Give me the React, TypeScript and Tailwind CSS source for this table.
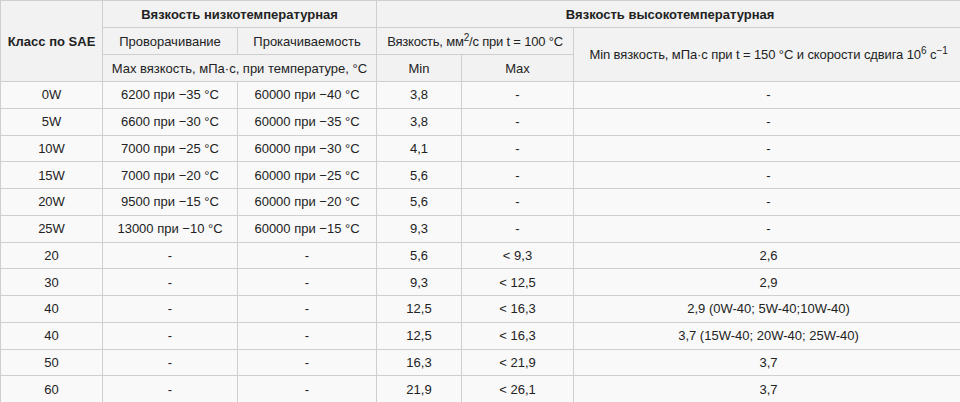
import React from 'react'

const rows: [string, string, string, string, string, string][] = [
  ['0W', '6200 при −35 °C', '60000 при −40 °C', '3,8', '-', '-'],
  ['5W', '6600 при −30 °C', '60000 при −35 °C', '3,8', '-', '-'],
  ['10W', '7000 при −25 °C', '60000 при −30 °C', '4,1', '-', '-'],
  ['15W', '7000 при −20 °C', '60000 при −25 °C', '5,6', '-', '-'],
  ['20W', '9500 при −15 °C', '60000 при −20 °C', '5,6', '-', '-'],
  ['25W', '13000 при −10 °C', '60000 при −15 °C', '9,3', '-', '-'],
  ['20', '-', '-', '5,6', '< 9,3', '2,6'],
  ['30', '-', '-', '9,3', '< 12,5', '2,9'],
  ['40', '-', '-', '12,5', '< 16,3', '2,9 (0W-40; 5W-40;10W-40)'],
  ['40', '-', '-', '12,5', '< 16,3', '3,7 (15W-40; 20W-40; 25W-40)'],
  ['50', '-', '-', '16,3', '< 21,9', '3,7'],
  ['60', '-', '-', '21,9', '< 26,1', '3,7'],
]

const th = 'border border-[#cfcfcf] bg-[#f2f2f2] px-1 text-center align-middle font-normal'
const td = 'border border-[#cfcfcf] px-1 text-center align-middle'

export default function App() {
  return (
    <div className="w-[960px] h-[402px] overflow-hidden bg-white">
      <table
        className="table-fixed border-collapse w-[963px] text-[13px] leading-none text-[#222] bg-[#f9f9f9]"
        style={{ fontFamily: '"Liberation Sans", Arial, sans-serif' }}
      >
        <colgroup>
          <col className="w-[102px]" />
          <col className="w-[135px]" />
          <col className="w-[139px]" />
          <col className="w-[85px]" />
          <col className="w-[112px]" />
          <col className="w-[390px]" />
        </colgroup>
        <thead>
          <tr className="h-[27px]">
            <th rowSpan={3} className={`${th} !font-bold`}>Класс по SAE</th>
            <th colSpan={2} className={`${th} !font-bold`}>Вязкость низкотемпературная</th>
            <th colSpan={3} className={`${th} !font-bold`}>Вязкость высокотемпературная</th>
          </tr>
          <tr className="h-[27px]">
            <th className={th}>Проворачивание</th>
            <th className={th}>Прокачиваемость</th>
            <th colSpan={2} className={`${th} whitespace-nowrap tracking-[-0.2px]`}>
              Вязкость, мм<sup className="text-[10px]">2</sup>/с при t = 100 °C
            </th>
            <th rowSpan={2} className={`${th} whitespace-nowrap tracking-[-0.1px]`}>
              Min вязкость, мПа·с при t = 150 °C и скорости сдвига 10<sup className="text-[10px]">6</sup> с<sup className="text-[10px]">−1</sup>
            </th>
          </tr>
          <tr className="h-[27px]">
            <th colSpan={2} className={`${th} whitespace-nowrap`}>Max вязкость, мПа·с, при температуре, °C</th>
            <th className={th}>Min</th>
            <th className={th}>Max</th>
          </tr>
        </thead>
        <tbody>
          {rows.map((r, i) => (
            <tr key={i} className="h-[26.75px]">
              {r.map((c, j) => (
                <td key={j} className={td}>{c}</td>
              ))}
            </tr>
          ))}
        </tbody>
      </table>
    </div>
  )
}
